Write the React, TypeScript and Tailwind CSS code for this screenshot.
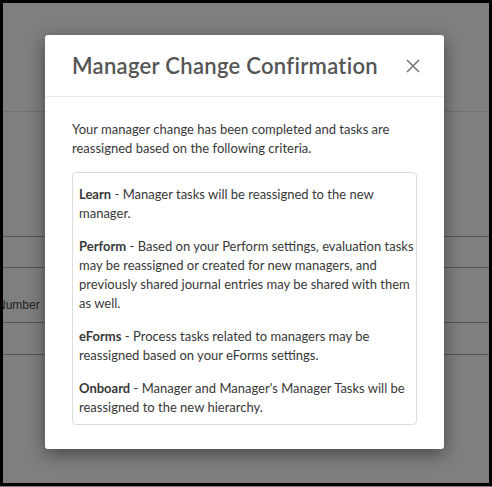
import React from 'react';

const criteria = [
  { name: 'Learn', text: 'Manager tasks will be reassigned to the new manager.' },
  {
    name: 'Perform',
    text: 'Based on your Perform settings, evaluation tasks may be reassigned or created for new managers, and previously shared journal entries may be shared with them as well.',
  },
  { name: 'eForms', text: 'Process tasks related to managers may be reassigned based on your eForms settings.' },
  { name: 'Onboard', text: "Manager and Manager's Manager Tasks will be reassigned to the new hierarchy." },
];

export default function App() {
  return (
    <div className="w-[492px] h-[487px] bg-[#7f7f7f] overflow-hidden">
      <div className="relative h-[486px] border-[3px] border-black overflow-hidden">
        {/* page behind the overlay */}
        <div className="flex flex-col font-['Liberation_Sans',sans-serif] text-[12px] text-[#222]">
          <div className="h-[109px] border-b border-[#707070]" />
          <div className="h-[125px] border-b border-[#555]" />
          <div className="h-[31px] border-b border-[#555]" />
          <div className="h-[55px] border-b border-[#555] pt-[30px] leading-[14px] -ml-[6px]">Number</div>
          <div className="h-[32px] border-b border-[#555]" />
        </div>

        {/* modal */}
        <div className="absolute left-[42px] top-[32px] w-[399px] h-[414px] bg-white rounded-[3px] shadow-[0_5px_18px_rgba(0,0,0,0.45)] font-['Lato',sans-serif]">
          <div className="h-[62px] pl-[27px] pr-[24px] flex items-center justify-between border-b border-[#ececec]">
            <h2 className="text-[22px] font-semibold text-[#555] tracking-[0.3px]">Manager Change Confirmation</h2>
            <button className="w-[14px] h-[14px] flex items-center justify-center">
              <svg width="14" height="14" viewBox="0 0 14 14" fill="none" stroke="#777" strokeWidth="1.6">
                <path d="M1 1L13 13M13 1L1 13" />
              </svg>
            </button>
          </div>
          <div className="px-[27px] pt-[23px] text-[13px] leading-[19px] text-[#383838]">
            <p>Your manager change has been completed and tasks are reassigned based on the following criteria.</p>
            <div className="mt-[14px] border border-[#dcdcdc] rounded-[4px] pl-[6px] pr-[2px] pt-[12px] pb-[7px]">
              {criteria.map((c, i) => (
                <p key={c.name} className={i < criteria.length - 1 ? 'mb-[14px]' : ''}>
                  <span className="font-bold">{c.name}</span> - {c.text}
                </p>
              ))}
            </div>
          </div>
        </div>
      </div>
    </div>
  );
}
